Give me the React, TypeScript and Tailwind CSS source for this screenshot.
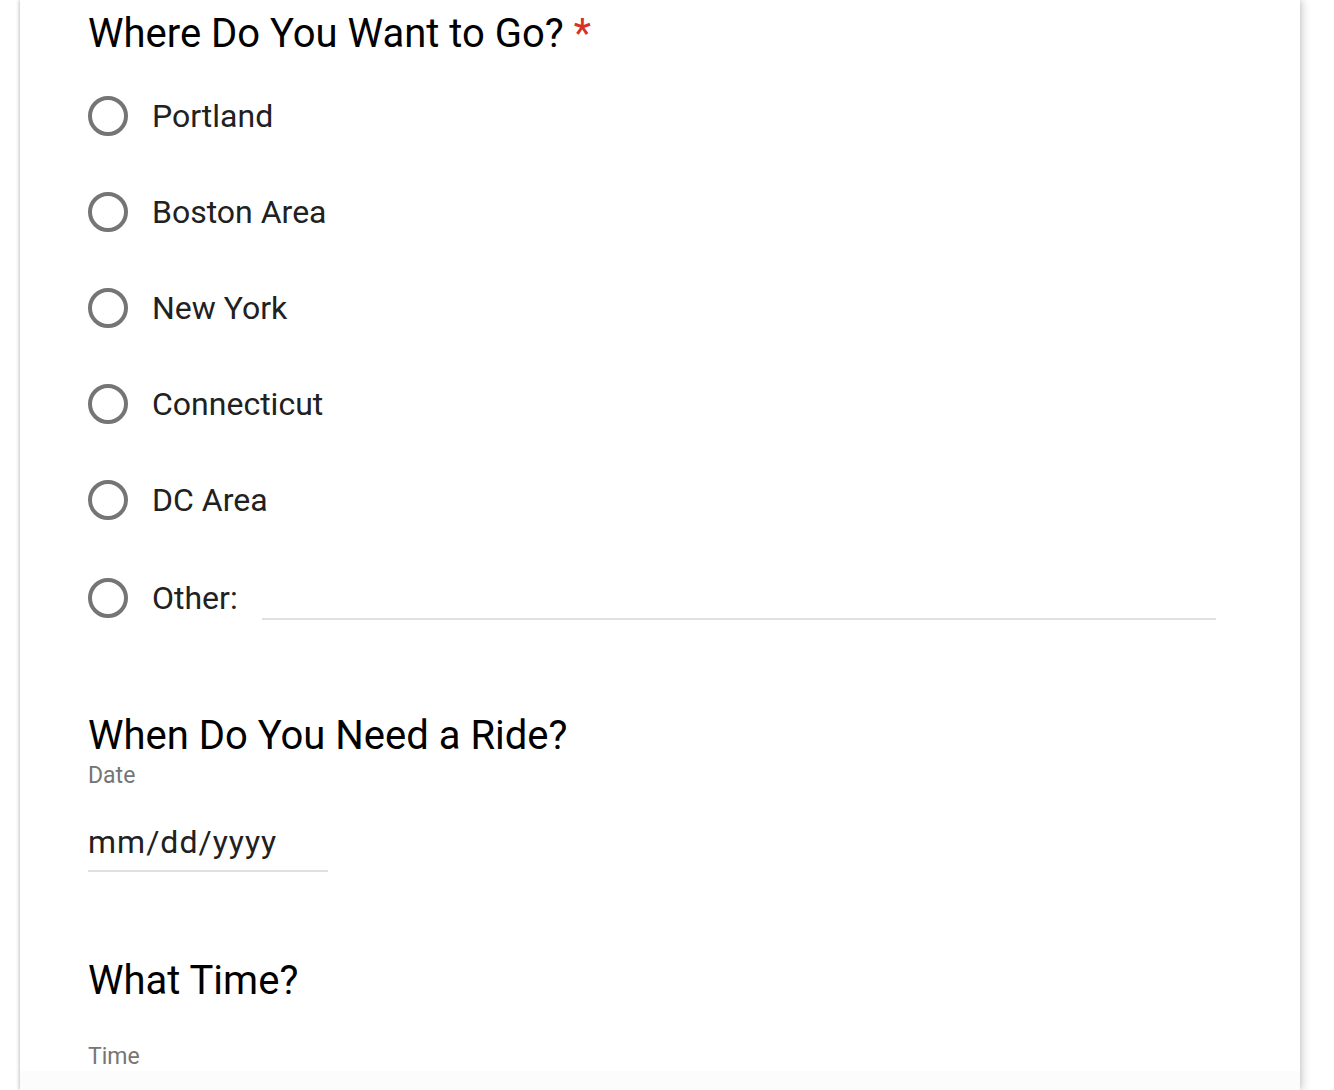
import React from "react";

const options = ["Portland", "Boston Area", "New York", "Connecticut", "DC Area"];

function Radio() {
  return (
    <span className="block h-[40px] w-[40px] shrink-0 rounded-full border-[4px] border-[#757575]" />
  );
}

export default function App() {
  return (
    <div
      className="min-h-[1090px] bg-white"
      style={{ fontFamily: "Roboto, 'Noto Sans', Arial, sans-serif" }}
    >
      <div className="ml-[20px] w-[1280px] h-[1090px] overflow-hidden bg-white shadow-[3px_0_8px_rgba(0,0,0,0.18),-1px_0_3px_rgba(0,0,0,0.18)] flex flex-col">
        <div className="pl-[68px] pr-[84px] pt-[10px]">
          <h2 className="text-[40px] leading-[48px] text-black font-normal">
            Where Do You Want to Go?
            <span className="ml-[10px] text-[#d93025]">*</span>
          </h2>

          <div className="mt-[10px] flex flex-col">
            {options.map((o) => (
              <div key={o} className="flex h-[96px] items-center gap-6">
                <Radio />
                <span className="text-[32px] leading-[40px] text-[#212121]">{o}</span>
              </div>
            ))}
            <div className="mt-[2px] flex h-[96px] items-center gap-6">
              <Radio />
              <span className="text-[32px] leading-[40px] text-[#212121]">Other:</span>
              <div className="mt-[42px] h-[2px] flex-1 bg-[#e0e0e0]" />
            </div>
          </div>

          <h2 className="mt-[66px] text-[40px] leading-[48px] text-black font-normal">
            When Do You Need a Ride?
          </h2>
          <div className="mt-[4px] text-[23px] leading-[24px] text-[#757575]">Date</div>
          <div className="mt-[34px] w-[240px] border-b-[2px] border-[#e0e0e0] pb-[8px] text-[32px] leading-[40px] tracking-[1px] text-[#212121]">
            mm/dd/yyyy
          </div>

          <h2 className="mt-[85px] text-[40px] leading-[48px] text-black font-normal">
            What Time?
          </h2>
          <div className="mt-[40px] text-[23px] leading-[24px] text-[#757575]">Time</div>
        </div>
        <div className="mt-[2px] flex-1 bg-[#fcfcfc]" />
      </div>
    </div>
  );
}
